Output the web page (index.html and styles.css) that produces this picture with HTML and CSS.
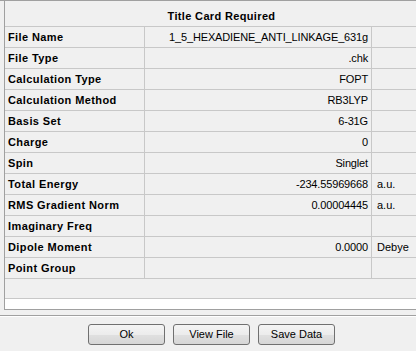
FILE: index.html
```html
<!DOCTYPE html>
<html>
<head>
<meta charset="utf-8">
<link rel="stylesheet" href="styles.css">
</head>
<body>
<div class="topline"></div>
<div class="grid">
  <div class="header">Title Card Required</div>
  <div class="row"><div class="label">File Name</div><div class="value">1_5_HEXADIENE_ANTI_LINKAGE_631g</div><div class="unit"></div></div>
  <div class="row"><div class="label">File Type</div><div class="value">.chk</div><div class="unit"></div></div>
  <div class="row"><div class="label">Calculation Type</div><div class="value">FOPT</div><div class="unit"></div></div>
  <div class="row"><div class="label">Calculation Method</div><div class="value">RB3LYP</div><div class="unit"></div></div>
  <div class="row"><div class="label">Basis Set</div><div class="value">6-31G</div><div class="unit"></div></div>
  <div class="row"><div class="label">Charge</div><div class="value">0</div><div class="unit"></div></div>
  <div class="row"><div class="label">Spin</div><div class="value">Singlet</div><div class="unit"></div></div>
  <div class="row"><div class="label">Total Energy</div><div class="value">-234.55969668</div><div class="unit">a.u.</div></div>
  <div class="row"><div class="label">RMS Gradient Norm</div><div class="value">0.00004445</div><div class="unit">a.u.</div></div>
  <div class="row"><div class="label">Imaginary Freq</div><div class="value"></div><div class="unit"></div></div>
  <div class="row"><div class="label">Dipole Moment</div><div class="value">0.0000</div><div class="unit">Debye</div></div>
  <div class="row"><div class="label">Point Group</div><div class="value"></div><div class="unit"></div></div>
  <div class="filler"></div>
  <div class="hscroll"></div>
</div>
<div class="separator"></div>
<div class="buttons">
  <button class="btn">Ok</button>
  <button class="btn">View File</button>
  <button class="btn">Save Data</button>
</div>
</body>
</html>
```
FILE: styles.css
```css
html, body {
  margin: 0;
  padding: 0;
}
body {
  width: 416px;
  height: 351px;
  overflow: hidden;
  background: #f0f0f0;
  font-family: "Liberation Sans", Arial, sans-serif;
  font-size: 11px;
  color: #000;
}
.topline {
  height: 1px;
  background: #a0a0a0;
}
.grid {
  margin-left: 4px;
  width: 411px;
  border-left: 1px solid #a0a0a0;
  border-bottom: 1px solid #a0a0a0;
}
.header {
  height: 19px;
  padding-top: 6px;
  padding-left: 22px;
  line-height: 19px;
  text-align: center;
  font-weight: bold;
  letter-spacing: 0.35px;
  border-bottom: 1px solid #c8c8c8;
}
.row {
  display: flex;
  height: 20px;
  line-height: 20px;
  border-bottom: 1px solid #c8c8c8;
}
.label {
  width: 136px;
  padding-left: 3px;
  border-right: 1px solid #c8c8c8;
  font-weight: bold;
  letter-spacing: 0.4px;
  white-space: nowrap;
}
.value {
  width: 223px;
  padding-right: 3px;
  border-right: 1px solid #c8c8c8;
  text-align: right;
  letter-spacing: -0.15px;
  white-space: nowrap;
}
.unit {
  flex: 1;
  padding-left: 5px;
  white-space: nowrap;
}
.filler {
  height: 19px;
  border-bottom: 1px solid #c8c8c8;
}
.hscroll {
  height: 10px;
  background: #ffffff;
}
.separator {
  margin-top: 5px;
  height: 1px;
  background: #a0a0a0;
  border-bottom: 1px solid #ffffff;
}
.buttons {
  display: flex;
  gap: 8px;
  padding-left: 88px;
  margin-top: 7px;
}
.btn {
  width: 77px;
  height: 21px;
  padding: 0;
  margin: 0;
  border: 1px solid #707070;
  border-radius: 3px;
  background: linear-gradient(#f4f4f4 0%, #ececec 50%, #e0e0e0 51%, #d6d6d6 100%);
  font-family: "Liberation Sans", Arial, sans-serif;
  font-size: 11px;
  color: #000;
  line-height: 19px;
  text-align: center;
}
```
